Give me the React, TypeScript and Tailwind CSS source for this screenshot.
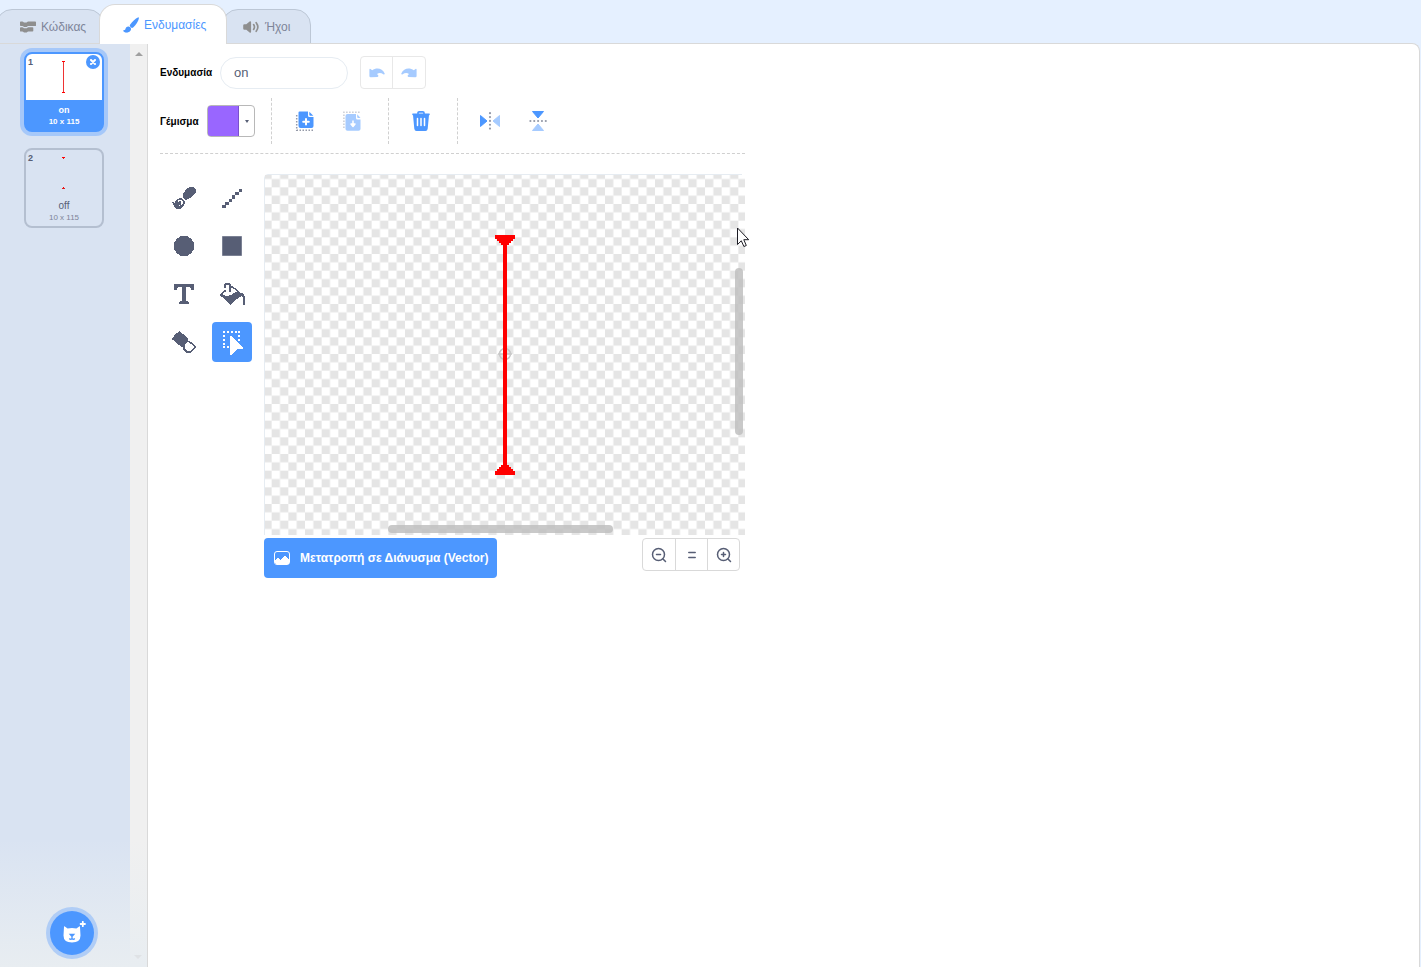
import React from "react";

type IconProps = { className?: string };

/* Paints a bitmap from [row, startColumn, endColumn] runs. */
const runs = (list: number[][]) =>
  list.map(([y, a, b]) => `M${a} ${y}H${b}v1H${a}z`).join("");

function CodeIcon({ className }: IconProps) {
  return (
    <svg className={className} width="16" height="12" viewBox="0 0 16 12" fill="#8f8f8f">
      <path d="M0 1.2Q0 .4.8.4H2.4Q3 .4 3.4.9 3.9 1.4 4.5 1.4H6Q6.7 1.4 7.1.9 7.5.4 8.1.4H15.200Q16 .4 16 1.2V4.400Q16 5 15.200 5H8.200Q7.600 5 7.200 5.500 6.700 6 6.100 6H4.500Q3.900 6 3.500 5.500 3 5 2.400 5H.8Q0 5 0 4.300z" />
      <path d="M0 7Q0 6.200.8 6.200H2.400Q3 6.200 3.400 6.700 3.900 7.200 4.500 7.200H6.200Q6.900 7.200 7.300 6.700 7.700 6.200 8.300 6.200H12.500Q13.300 6.200 13.300 7V9.800Q13.300 10.600 12.500 10.600H8.200Q7.600 10.600 7.200 11.100 6.700 11.600 6.100 11.600H4.500Q3.900 11.600 3.500 11.100 3 10.600 2.400 10.600H.8Q0 10.600 0 9.900z" />
    </svg>
  );
}

function BrushIcon({ className }: IconProps) {
  return (
    <svg className={className} width="16" height="16" viewBox="0 0 16 16" fill="#4c97ff">
      <path d="M14.900.4C15.700.2 16 .9 15.800 1.700 15.300 4.200 13.100 7.800 10.400 10.200Q9.500 11 8.900 10.900 7.600 10.200 6.800 8.900 6.600 8.300 7.200 7.400C9.400 4.200 12.600 1.300 14.900.4z" />
      <path d="M5.700 9.500C7.400 9.800 8.300 11 8 12.600 7.500 14.900 5.400 15.800 3.200 15.600 1.900 15.500.7 14.800.2 14 0 13.500.4 13.200.9 13.200 2 13.200 2.300 12.500 2.600 11.500 3.100 10 4.200 9.300 5.700 9.500z" />
    </svg>
  );
}

function SoundIcon({ className }: IconProps) {
  return (
    <svg className={className} width="17" height="12" viewBox="0 0 17 12" fill="#8f8f8f">
      <path d="M1.400 3.300H3.300L6.600.4Q8 -.3 8.100 1.200V10.800Q8 12.300 6.600 11.600L3.300 8.700H1.400Q.2 8.700.2 7.500V4.500Q.2 3.300 1.400 3.300z" />
      <path d="M10.600 3.600Q12.300 6 10.600 8.400M13.200 1.700Q16.500 6 13.200 10.300" fill="none" stroke="#8f8f8f" strokeWidth="1.700" strokeLinecap="round" />
    </svg>
  );
}

function UndoIcon({ className }: IconProps) {
  return (
    <svg className={className} width="16" height="10" viewBox="0 0 16 10" fill="#a6cbff">
      <path d="M.4 1.500Q.6.500 1.500 1L3.200 2.200C7.200-.8 13.400-.2 15.700 5.400 16 6.500 15 6.900 14.300 6.300 12.300 4.700 10 4.500 8 5.900L9.200 7.300Q9.800 8.600 8.500 8.900L1.700 9.300Q.4 9.300.4 8z" />
    </svg>
  );
}

function CopyIcon() {
  return (
    <svg width="20" height="20" viewBox="0 0 20 20">
      <path d="M4.500.5H13V4.500Q13 6 14.500 6H18.500V15Q18.500 17 16.500 17H5.500Q3.500 17 3.500 15V1.500Q3.500.5 4.500.5z" fill="#4c97ff" />
      <path d="M14.300.7L18.300 4.700H15.300Q14.300 4.700 14.300 3.700z" fill="#4c97ff" />
      <path d="M11 8V13.600M8.200 10.800H13.800" stroke="#fff" strokeWidth="2" strokeLinecap="round" />
      <path d="M1.700 4V19.200H18" fill="none" stroke="#959aa8" strokeWidth="1.500" strokeDasharray="1.500 1.500" />
    </svg>
  );
}

function PasteIcon() {
  return (
    <svg width="20" height="20" viewBox="0 0 20 20">
      <path d="M4.500 3H13V7Q13 8.500 14.500 8.500H17.500V18Q17.500 19.800 15.500 19.800H4.500Q2.500 19.800 2.500 18V5Q2.500 3 4.500 3z" fill="#a6cbff" />
      <path d="M14.200 3.200L17.500 7H15.200Q14.200 7 14.200 6z" fill="#a6cbff" />
      <path d="M10 9.500V13.500M8 13H12L10 15.500z" fill="#fff" stroke="#fff" strokeWidth="1.500" strokeLinejoin="round" />
      <path d="M.9 17V1.200H17" fill="none" stroke="#c9ccd4" strokeWidth="1.500" strokeDasharray="1.500 1.500" />
    </svg>
  );
}

function TrashIcon() {
  return (
    <svg width="20" height="22" viewBox="0 0 20 22">
      <path d="M7 4V3Q7 1.800 8.200 1.800H11.800Q13 1.800 13 3V4" fill="none" stroke="#4c97ff" strokeWidth="1.700" />
      <path d="M1.500 3.400H18.500Q19.300 4.300 18.300 5.200H1.700Q.7 4.300 1.500 3.400zM2 5H18L16.700 18.800Q16.400 21 14.500 21H5.500Q3.600 21 3.300 18.800z" fill="#4c97ff" />
      <path d="M6.500 8.500V15.500M10 8.500V15.500M13.500 8.500V15.500" stroke="#fff" strokeWidth="1.500" strokeLinecap="round" />
    </svg>
  );
}

function FlipIcon({ className }: IconProps) {
  return (
    <svg className={className} width="20" height="20" viewBox="0 0 20 20">
      <path d="M.5 4.500L7 10 .5 15.500z" fill="#4c97ff" stroke="#4c97ff" strokeLinejoin="round" />
      <path d="M19.500 4.500L13 10 19.500 15.500z" fill="#a6cbff" stroke="#a6cbff" strokeLinejoin="round" />
      <path d="M10 2.200V18" stroke="#959aa8" strokeWidth="2.200" strokeLinecap="round" strokeDasharray="0 3.850" />
    </svg>
  );
}

const ink = "#575e75";

const brushRuns = [
  [0, 17, 22], [1, 15, 23], [2, 14, 24], [3, 13, 24], [4, 13, 24], [5, 12, 24], [6, 11, 23],
  [7, 11, 22], [8, 11, 21], [9, 11, 20], [10, 11, 19], [11, 12, 17], [11, 7, 10], [12, 5, 11],
  [12, 13, 15], [13, 4, 6], [13, 10, 12], [14, 3, 6], [14, 7, 9], [14, 11, 13],
  [15, 0, 2], [15, 3, 9], [15, 11, 13], [16, 1, 9], [16, 11, 13], [17, 1, 9], [17, 10, 12],
  [18, 2, 7], [18, 8, 12], [19, 2, 11], [20, 3, 10], [21, 4, 9],
];

const eraserRuns = [
  [0, 7, 8], [1, 6, 9], [2, 4, 10], [3, 3, 12], [4, 2, 13], [5, 2, 14], [6, 1, 15], [7, 0, 16],
  [8, 0, 16], [9, 2, 16], [10, 3, 18], [11, 4, 15], [11, 17, 20], [12, 5, 14],
  [12, 18, 21], [13, 6, 13], [13, 20, 22], [14, 8, 13], [14, 21, 23], [15, 9, 13], [15, 22, 24],
  [16, 11, 13], [16, 22, 24], [17, 11, 13], [17, 21, 23], [18, 11, 14], [18, 20, 22],
  [19, 12, 15], [19, 19, 21], [20, 13, 20], [21, 14, 19],
];

const fillRuns = [
  [0, 5, 10], [1, 4, 11], [2, 4, 6], [2, 9, 11], [3, 4, 6], [3, 9, 13], [4, 4, 6], [4, 9, 14],
  [5, 9, 11], [5, 13, 16], [6, 9, 11], [6, 15, 17], [7, 4, 6], [7, 9, 11],
  [7, 16, 18], [8, 3, 6], [8, 9, 11], [8, 17, 19], [9, 2, 4], [9, 15, 20], [10, 1, 3],
  [10, 13, 23], [11, 0, 3], [11, 12, 24], [12, 0, 5], [12, 9, 24], [13, 1, 21], [13, 22, 25],
  [14, 3, 19], [14, 23, 25], [15, 4, 18], [15, 23, 25], [16, 5, 16], [16, 23, 25], [17, 6, 15],
  [17, 23, 25], [18, 7, 14], [18, 23, 25], [19, 8, 13], [19, 23, 25], [20, 9, 12], [20, 23, 25],
  [21, 10, 11], [21, 23, 25],
];

const ovalRuns = [
  [0, 6, 14], [1, 5, 15], [2, 3, 17], [3, 2, 18], [4, 2, 18], [5, 1, 19], [6, 0, 20], [7, 0, 20],
  [8, 0, 20], [9, 0, 20], [10, 0, 20], [11, 0, 20], [12, 0, 20], [13, 0, 20], [14, 1, 19],
  [15, 2, 18], [16, 2, 18], [17, 3, 17], [18, 5, 15], [19, 6, 14],
];

function Bitmap({ w, h, list }: { w: number; h: number; list: number[][] }) {
  return (
    <svg width={w} height={h} viewBox={`0 0 ${w} ${h}`} shapeRendering="crispEdges">
      <path d={runs(list)} fill={ink} />
    </svg>
  );
}

const tools = [
  { name: "Πινέλο", icon: <Bitmap w={24} h={22} list={brushRuns} /> },
  {
    name: "Γραμμή",
    icon: (
      <svg width="20" height="20" viewBox="0 0 20 20" fill={ink} shapeRendering="crispEdges">
        <path d="M0 17h4v3H0zM3 14h4v3H3zM7 11h3v3H7zM10 7h3v4h-3zM13 4h4v3h-4zM17 1h3v3h-3z" />
      </svg>
    ),
  },
  { name: "Κύκλος", icon: <Bitmap w={20} h={20} list={ovalRuns} /> },
  {
    name: "Ορθογώνιο",
    icon: (
      <svg width="20" height="20" viewBox="0 0 20 20">
        <path d="M.5.500h19v19H.5z" fill={ink} stroke="#7b8194" />
      </svg>
    ),
  },
  {
    name: "Κείμενο",
    icon: (
      <svg width="20" height="20" viewBox="0 0 20 20" fill={ink} shapeRendering="crispEdges">
        <path d="M0 0H20V6H17V4H16V3H12V17H14V18H15V20H5V18H6V17H8V3H4V4H3V6H0z" />
      </svg>
    ),
  },
  { name: "Γέμισμα", icon: <Bitmap w={25} h={22} list={fillRuns} /> },
  { name: "Γόμα", icon: <Bitmap w={24} h={22} list={eraserRuns} /> },
  {
    name: "Επιλογή",
    icon: (
      <svg width="22" height="26" viewBox="0 0 22 26" fill="#fff">
        <path
          d="M2 2h2v2H2zM6 2h2v2H6zM10 2h2v2h-2zM14 2h2v2h-2zM17 2h2v2h-2zM2 6h2v2H2zM2 10h2v2H2zM2 14h2v2H2zM2 17h2v2H2zM6 17h2v2H6zM17 6h2v2h-2zM17 10h2v2h-2z"
          shapeRendering="crispEdges"
        />
        <path d="M9 7H10L22 18V20H16L11 26H9z" shapeRendering="crispEdges" />
      </svg>
    ),
  },
];

function ZoomGlyph({ plus }: { plus?: boolean }) {
  return (
    <svg width="16" height="16" viewBox="0 0 16 16" fill="none" stroke={ink} strokeWidth="1.500" strokeLinecap="round">
      <circle cx="7.500" cy="7.500" r="6" />
      <path d={plus ? "M12 12l2.500 2.500M5.500 7.500h4M7.500 5.500v4" : "M12 12l2.500 2.500M5.500 7.500h4"} />
    </svg>
  );
}

function Canvas() {
  return (
    <svg width="481" height="361" viewBox="0 0 481 361" role="img" aria-label="Καμβάς" className="block">
      <defs>
        <pattern id="checks" x="241" y="180" width="16.6667" height="16.6667" patternUnits="userSpaceOnUse">
          <path d="M8.333 0h8.333v8.333H8.333zM0 8.333h8.333v8.333H0z" fill="#e5e5e5" />
        </pattern>
      </defs>
      <path d="M.5 361V4Q.5.500 4 .5H478" fill="#fff" stroke="#e6ecf2" />
      <rect x="1" y="1" width="480" height="360" fill="url(#checks)" />
      <g fill="none" stroke="#c8c8c8" strokeWidth="1.500">
        <circle cx="241" cy="180" r="5.500" />
        <path d="M234 180h14M241 173v14" />
      </g>
      <path
        d="M231 61h20v4h-2v2h-2v2h-2v2h-2V291h2v2h2v2h2v2h2v4H231v-4h2v-2h2v-2h2v-2h2V71h-2v-2h-2v-2h-2v-2h-2z"
        fill="#f00"
        shapeRendering="crispEdges"
      />
      <rect x="471" y="94" width="8" height="167" rx="4" fill="#bfbfbf" fillOpacity=".85" />
      <rect x="124" y="351" width="225" height="8" rx="4" fill="#bfbfbf" fillOpacity=".85" />
    </svg>
  );
}

function Divider() {
  return <div className="h-[46px] border-l border-dashed border-[#d0d0d0]" />;
}

export default function App() {
  return (
    <div className="relative flex min-h-screen flex-col overflow-hidden bg-[#e5f0ff] font-['Liberation_Sans',Arial,sans-serif] text-[#575e75]">
      <nav className="flex h-11 items-end text-xs">
        <button className="-ml-1 flex h-[35px] w-[108px] items-center gap-[5px] rounded-t-2xl border border-[#bcc7d6] bg-[#d9e3f2] pl-[23px] text-[#7e8599]">
          <CodeIcon />
          Κώδικας
        </button>
        <button className="z-10 -ml-[5px] flex h-10 w-32 items-center gap-[5px] rounded-t-2xl border border-b-0 border-[#d9d9d9] bg-white pl-[23px] text-[#4c97ff]">
          <BrushIcon />
          Ενδυμασίες
        </button>
        <button className="-ml-[5px] flex h-[35px] w-[89px] items-center gap-[5px] rounded-t-2xl border border-[#bcc7d6] bg-[#d9e3f2] pl-5 text-[#7e8599]">
          <SoundIcon />
          Ήχοι
        </button>
      </nav>

      <div className="-mt-px mr-px flex flex-1 rounded-tr-lg border-r border-t border-[#d9d9d9] bg-white">
        <aside className="flex w-[148px] flex-col border-r border-[#d9d9d9] bg-[linear-gradient(to_right,#d9e3f2_130px,#f0f0f0_130px)]">
          <div className="flex flex-1">
            <div className="flex w-[130px] flex-col gap-4 pl-6 pt-2">
              <button className="relative flex h-20 w-20 flex-col items-center overflow-visible rounded-lg border-2 border-[#4c97ff] bg-[#4c97ff] text-white ring-4 ring-[#a6c8f9]">
                <span className="flex h-[46px] w-full items-start justify-between rounded-t-md bg-white pl-[2px]">
                  <b className="pt-1 text-[9px] leading-[9px] text-[#575e75]">1</b>
                  <svg width="4" height="34" viewBox="0 0 4 34" className="mr-9 mt-[6px]">
                    <path d="M0 1.500h3M0 32.500h3" stroke="#f00" />
                    <path d="M1.500 2v30" stroke="#e33" />
                  </svg>
                </span>
                <b className="pt-1 text-[9px] leading-3">on</b>
                <b className="text-[8px] leading-[11px]">10 x 115</b>
                <span className="absolute right-[2px] top-px flex h-[14px] w-[14px] items-center justify-center rounded-full bg-[#4c97ff]">
                  <svg width="6" height="6" viewBox="0 0 6 6" stroke="#fff" strokeWidth="2" strokeLinecap="round">
                    <path d="M1 1l4 4M5 1L1 5" />
                  </svg>
                </span>
              </button>
              <button className="flex h-20 w-20 flex-col items-center rounded-lg border-2 border-[#b4bfd0]">
                <span className="flex h-[46px] w-full items-start justify-between pl-[2px]">
                  <b className="pt-1 text-[9px] leading-[9px]">2</b>
                  <svg width="4" height="34" viewBox="0 0 4 34" className="mr-9 mt-[6px]">
                    <path d="M0 1.500h3M1 31.500h1" stroke="#f00" />
                    <path d="M1 2.500h1M0 32.500h3" stroke="#d22" />
                  </svg>
                </span>
                <span className="pt-1 text-[10px] leading-3">off</span>
                <span className="text-[8px] leading-[11px] text-[#7e8599]">10 x 115</span>
              </button>
            </div>
            <div className="flex flex-1 justify-center pt-2">
              <svg width="8" height="4" viewBox="0 0 8 4">
                <path d="M4 0l4 4H0z" fill="#a0a0a0" />
              </svg>
            </div>
          </div>
          <div className="flex h-32 items-end justify-between bg-linear-to-b from-transparent to-[#e8edf1] pb-2 pl-[50px] pr-[5px]">
            <button
              aria-label="Επιλογή Ενδυμασίας"
              className="mb-1 flex h-11 w-11 items-center justify-center rounded-full bg-[#4c97ff] ring-4 ring-[#b0cdf6]"
            >
              <svg width="28" height="24" viewBox="-2 0 28 24">
                <path d="M4 6Q3.800 5 4.800 5.500L7.600 7.500Q12 6.500 16.400 7.500L19.200 5.500Q20.200 5 20 6L20.500 14.500Q20.500 21.500 12 21.500 3.500 21.500 3.500 14.500z" fill="#fff" />
                <path d="M10.200 13.500h3.600L12 15.500zM12 15v2.500M9.300 17.500Q10.500 19 12 17.500 13.500 19 14.800 17.500" fill="none" stroke="#4c97ff" strokeWidth="1.300" />
                <path d="M22.800.8v4.400M20.600 3H25" stroke="#fff" strokeWidth="1.800" strokeLinecap="round" />
              </svg>
            </button>
            <svg width="8" height="4" viewBox="0 0 8 4">
              <path d="M0 0h8L4 4z" fill="#dfe2e5" />
            </svg>
          </div>
        </aside>

        <main className="w-[597px] pl-3 pt-3">
          <div className="flex items-center gap-3">
            <div className="flex items-center gap-2">
              <label htmlFor="costume" className="w-[52px] whitespace-nowrap text-[10px] font-bold text-black">
                Ενδυμασία
              </label>
              <input
                id="costume"
                defaultValue="on"
                className="h-8 w-32 rounded-full border border-[#e6ecf2] bg-white px-[13px] text-[13px] text-[#575e75] outline-none"
              />
            </div>
            <div className="flex h-[33px] w-[66px] rounded border border-[#e8e8e8]">
              <button aria-label="Αναίρεση" className="flex w-8 items-center justify-center border-r border-[#e8e8e8]">
                <UndoIcon />
              </button>
              <button aria-label="Επανάληψη" className="flex w-8 items-center justify-center">
                <UndoIcon className="-scale-x-100" />
              </button>
            </div>
          </div>

          <div className="mt-[9px] flex items-center border-b border-dashed border-[#d0d0d0] pb-[9px]">
            <span className="w-[47px] text-[10px] font-bold text-black">Γέμισμα</span>
            <button aria-label="Χρώμα γεμίσματος" className="mr-4 flex h-8 w-12 overflow-hidden rounded border border-[#b8b8b8]">
              <span className="-my-px -ml-px h-8 w-8 rounded-l border border-[#7a51cc] bg-[#9966ff]" />
              <span className="flex h-full flex-1 items-center justify-center">
                <svg width="4" height="3" viewBox="0 0 4 3">
                  <path d="M0 0h4L2 3z" fill={ink} />
                </svg>
              </span>
            </button>
            <Divider />
            <div className="flex w-[116px] items-center justify-center gap-7 pr-[2px]">
              <button aria-label="Αντιγραφή"><CopyIcon /></button>
              <button aria-label="Επικόλληση"><PasteIcon /></button>
            </div>
            <Divider />
            <div className="flex w-[68px] items-center justify-center pr-1">
              <button aria-label="Διαγραφή"><TrashIcon /></button>
            </div>
            <Divider />
            <div className="flex items-center gap-7 pl-[22px]">
              <button aria-label="Οριζόντια αναστροφή"><FlipIcon /></button>
              <button aria-label="Κάθετη αναστροφή"><FlipIcon className="rotate-90" /></button>
            </div>
          </div>

          <div className="mt-5 flex">
            <div className="grid w-[104px] grid-cols-[40px_40px] content-start gap-2 pl-1 pt-1">
              {tools.map((t, i) => (
                <button
                  key={t.name}
                  aria-label={t.name}
                  className={
                    i === 7
                      ? "flex h-10 w-10 items-center justify-center rounded bg-[#4c97ff]"
                      : "flex h-10 w-10 items-center justify-center rounded"
                  }
                >
                  {t.icon}
                </button>
              ))}
            </div>
            <div>
              <Canvas />
              <div className="mt-[3px] flex items-start justify-between pr-[5px]">
                <button className="flex h-10 w-[233px] items-center gap-[10px] whitespace-nowrap rounded bg-[#4c97ff] pl-[10px] text-xs font-bold text-white">
                  <svg width="16" height="14" viewBox="0 0 16 14">
                    <rect x=".5" y=".5" width="15" height="13" rx="2.500" fill="none" stroke="#fff" />
                    <path d="M1 9h1V8h1V7h2v1h1v1h1V8h1V7h1V6h1V5h2v1h1v1h1v1h1v5H2v-1H1z" fill="#fff" shapeRendering="crispEdges" />
                  </svg>
                  Μετατροπή σε Διάνυσμα (Vector)
                </button>
                <div className="flex h-[33px] w-[98px] rounded border border-[#d9d9d9]">
                  <button aria-label="Σμίκρυνση" className="flex w-[33px] items-center justify-center border-r border-[#d9d9d9]">
                    <ZoomGlyph />
                  </button>
                  <button aria-label="Επαναφορά μεγέθους" className="flex w-8 items-center justify-center border-r border-[#d9d9d9]">
                    <svg width="8" height="8" viewBox="0 0 8 8" stroke={ink} strokeWidth="1.500" strokeLinecap="round">
                      <path d="M.8 1.500h6.400M.8 6.500h6.400" />
                    </svg>
                  </button>
                  <button aria-label="Μεγέθυνση" className="flex flex-1 items-center justify-center">
                    <ZoomGlyph plus />
                  </button>
                </div>
              </div>
            </div>
          </div>
        </main>
      </div>

      <svg className="pointer-events-none absolute left-[737px] top-[227px]" width="13" height="21" viewBox="0 0 13 21">
        <path d="M.5 1V17.500L4.300 13.800 6.900 19.500 9.300 18.500 6.800 12.700H11.700z" fill="#fff" stroke="#1c1c24" />
      </svg>
    </div>
  );
}
